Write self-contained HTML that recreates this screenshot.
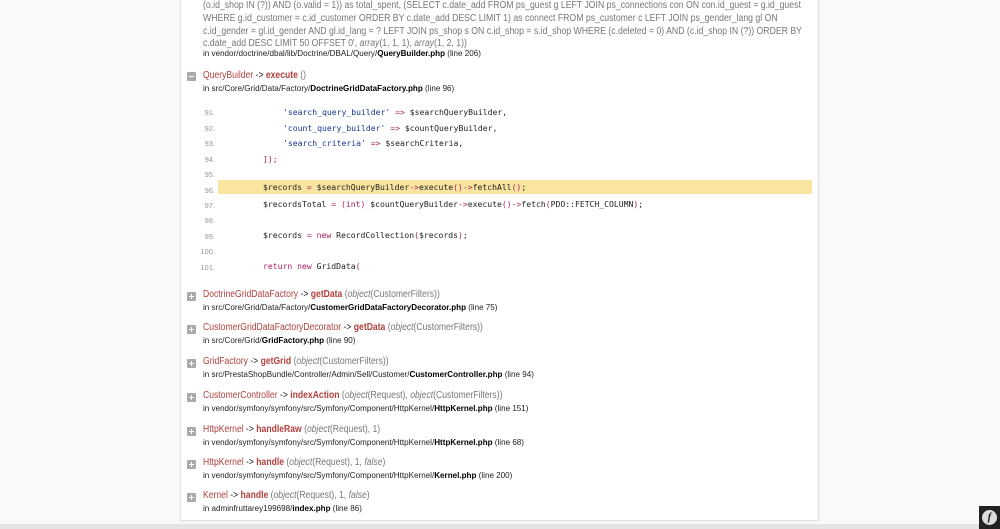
<!DOCTYPE html>
<html><head><meta charset="utf-8"><style>
body{margin:0;width:1000px;height:529px;background:#f9f9f9;overflow:hidden;font-family:"Liberation Sans",Arial,sans-serif;position:relative}
.panel{position:absolute;left:180px;top:-2px;width:637px;height:521px;background:#fff;border:1px solid #e2e2e2;box-shadow:0 0 1px rgba(128,128,128,.2)}
.bottom{position:absolute;left:0;top:524px;width:1000px;height:5px;background:#e4e4e4}
.a{position:absolute;white-space:nowrap;transform-origin:0 0}
.sql{left:203px;font-size:10px;color:#777;line-height:13px;transform:scaleX(.87)}
.t{font-size:10px;color:#b0413e;left:203px;transform:scaleX(.86)}
.t b{color:#b0413e}
.t .ar{color:#222}
.t .g{color:#777}
.f{font-size:8.6px;color:#222;left:203px;transform:scaleX(.94)}
.f b{color:#000}
.ic{position:absolute;left:187px;width:9px;height:9px;background:#aaa;border-radius:1px}
.ic:before{content:"";position:absolute;left:2px;top:4px;width:5px;height:1px;background:#fff}
.ic.p:after{content:"";position:absolute;left:4px;top:2px;width:1px;height:5px;background:#fff}
.ln{position:absolute;left:190px;width:25px;text-align:right;font-size:7.5px;color:#999}
.c{position:absolute;font-family:"DejaVu Sans Mono","Liberation Mono",monospace;font-size:8.1px;color:#222;white-space:pre}
.s{color:#183691}.k{color:#a71d5d}
.hl{position:absolute;left:218px;top:180px;width:594px;height:14px;background:#f9e5a0}
i{font-style:italic}
</style></head><body>
<div class="panel"></div>
<div class="a sql" style="top:-1px">(o.id_shop IN (?)) AND (o.valid = 1)) as total_spent, (SELECT c.date_add FROM ps_guest g LEFT JOIN ps_connections con ON con.id_guest = g.id_guest</div>
<div class="a sql" style="top:12px">WHERE g.id_customer = c.id_customer ORDER BY c.date_add DESC LIMIT 1) as connect FROM ps_customer c LEFT JOIN ps_gender_lang gl ON</div>
<div class="a sql" style="top:25px">c.id_gender = gl.id_gender AND gl.id_lang = ? LEFT JOIN ps_shop s ON c.id_shop = s.id_shop WHERE (c.deleted = 0) AND (c.id_shop IN (?)) ORDER BY</div>
<div class="a sql" style="top:37px">c.date_add DESC LIMIT 50 OFFSET 0', <i>array</i>(1, 1, 1), <i>array</i>(1, 2, 1))</div>
<div class="a f" style="top:48px">in vendor/doctrine/dbal/lib/Doctrine/DBAL/Query/<b>QueryBuilder.php</b> (line 206)</div>

<div class="ic" style="top:72px"></div>
<div class="a t" style="top:70px">QueryBuilder<span class="ar"> -&gt; </span><b>execute</b><span class="g"> ()</span></div>
<div class="a f" style="top:83px">in src/Core/Grid/Data/Factory/<b>DoctrineGridDataFactory.php</b> (line 96)</div>

<div class="hl"></div>
<div class="ln" style="top:108px">91.</div><div class="c" style="left:283px;top:107px"><span class="s">'search_query_builder'</span> <span class="k">=&gt;</span> $searchQueryBuilder,</div>
<div class="ln" style="top:124px">92.</div><div class="c" style="left:283px;top:123px"><span class="s">'count_query_builder'</span> <span class="k">=&gt;</span> $countQueryBuilder,</div>
<div class="ln" style="top:139px">93.</div><div class="c" style="left:283px;top:138px"><span class="s">'search_criteria'</span> <span class="k">=&gt;</span> $searchCriteria,</div>
<div class="ln" style="top:155px">94.</div><div class="c" style="left:263px;top:154px"><span class="k">]);</span></div>
<div class="ln" style="top:170px">95.</div>
<div class="ln" style="top:186px">96.</div><div class="c" style="left:263px;top:182px">$records <span class="k">=</span> $searchQueryBuilder<span class="k">-&gt;</span>execute<span class="k">()-&gt;</span>fetchAll<span class="k">()</span>;</div>
<div class="ln" style="top:201px">97.</div><div class="c" style="left:263px;top:199px">$recordsTotal <span class="k">=</span> <span class="k">(int)</span> $countQueryBuilder<span class="k">-&gt;</span>execute<span class="k">()-&gt;</span>fetch<span class="k">(</span>PDO::FETCH_COLUMN<span class="k">)</span>;</div>
<div class="ln" style="top:216px">98.</div>
<div class="ln" style="top:232px">99.</div><div class="c" style="left:263px;top:230px">$records <span class="k">=</span> <span class="k">new</span> RecordCollection<span class="k">(</span>$records<span class="k">)</span>;</div>
<div class="ln" style="top:247px">100.</div>
<div class="ln" style="top:263px">101.</div><div class="c" style="left:263px;top:261px"><span class="k">return new</span> GridData<span class="k">(</span></div>

<div class="ic p" style="top:292px"></div>
<div class="a t" style="top:289px">DoctrineGridDataFactory<span class="ar"> -&gt; </span><b>getData</b><span class="g"> (<i>object</i>(CustomerFilters))</span></div>
<div class="a f" style="top:302px">in src/Core/Grid/Data/Factory/<b>CustomerGridDataFactoryDecorator.php</b> (line 75)</div>

<div class="ic p" style="top:325px"></div>
<div class="a t" style="top:322px">CustomerGridDataFactoryDecorator<span class="ar"> -&gt; </span><b>getData</b><span class="g"> (<i>object</i>(CustomerFilters))</span></div>
<div class="a f" style="top:335px">in src/Core/Grid/<b>GridFactory.php</b> (line 90)</div>

<div class="ic p" style="top:359px"></div>
<div class="a t" style="top:356px">GridFactory<span class="ar"> -&gt; </span><b>getGrid</b><span class="g"> (<i>object</i>(CustomerFilters))</span></div>
<div class="a f" style="top:369px">in src/PrestaShopBundle/Controller/Admin/Sell/Customer/<b>CustomerController.php</b> (line 94)</div>

<div class="ic p" style="top:393px"></div>
<div class="a t" style="top:390px">CustomerController<span class="ar"> -&gt; </span><b>indexAction</b><span class="g"> (<i>object</i>(Request), <i>object</i>(CustomerFilters))</span></div>
<div class="a f" style="top:403px">in vendor/symfony/symfony/src/Symfony/Component/HttpKernel/<b>HttpKernel.php</b> (line 151)</div>

<div class="ic p" style="top:427px"></div>
<div class="a t" style="top:424px">HttpKernel<span class="ar"> -&gt; </span><b>handleRaw</b><span class="g"> (<i>object</i>(Request), 1)</span></div>
<div class="a f" style="top:437px">in vendor/symfony/symfony/src/Symfony/Component/HttpKernel/<b>HttpKernel.php</b> (line 68)</div>

<div class="ic p" style="top:460px"></div>
<div class="a t" style="top:457px">HttpKernel<span class="ar"> -&gt; </span><b>handle</b><span class="g"> (<i>object</i>(Request), 1, <i>false</i>)</span></div>
<div class="a f" style="top:470px">in vendor/symfony/symfony/src/Symfony/Component/HttpKernel/<b>Kernel.php</b> (line 200)</div>

<div class="ic p" style="top:493px"></div>
<div class="a t" style="top:490px">Kernel<span class="ar"> -&gt; </span><b>handle</b><span class="g"> (<i>object</i>(Request), 1, <i>false</i>)</span></div>
<div class="a f" style="top:503px">in adminfruttarey199698/<b>index.php</b> (line 86)</div>

<div class="bottom"></div>
<div style="position:absolute;left:979px;top:506px;width:21px;height:23px;background:#222"></div>
<div style="position:absolute;left:982px;top:510px;width:15px;height:15px;border-radius:50%;background:#ddd;color:#222;font:italic bold 11px 'Liberation Serif',serif;text-align:center;line-height:15px">f</div>
</body></html>
